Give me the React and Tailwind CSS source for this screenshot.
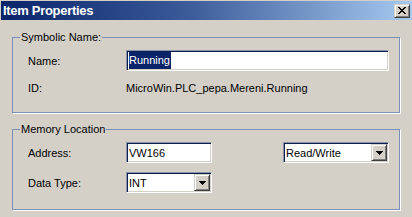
import React from "react";

const font = { fontFamily: '"Liberation Sans", Arial, sans-serif' };

function Arrow() {
  return (
    <div className="w-[16px] h-[17px] bg-[#d4d0c8] border border-t-[#d4d0c8] border-l-[#d4d0c8] border-b-[#404040] border-r-[#404040] shadow-[inset_1px_1px_0_#ffffff,inset_-1px_-1px_0_#808080] flex items-center justify-center">
      <svg width="7" height="4" viewBox="0 0 7 4">
        <path d="M0 0h7L3.5 4z" fill="#000" shapeRendering="crispEdges" />
      </svg>
    </div>
  );
}

function Sunken({ className, children }) {
  return (
    <div
      className={
        "h-[21px] bg-white border border-t-[#8a93a8] border-l-[#8a93a8] border-b-white border-r-white shadow-[inset_1px_1px_0_#0d1f4f,inset_-1px_-1px_0_#d4d0c8] flex items-center " +
        className
      }
    >
      {children}
    </div>
  );
}

function Combo({ className, value }) {
  return (
    <Sunken className={"pl-[2px] pr-[1px] justify-between " + className}>
      <span className="leading-[14px]">{value}</span>
      <Arrow />
    </Sunken>
  );
}

export default function App() {
  return (
    <div
      className="w-[412px] h-[217px] bg-[#d4d0c8] text-black text-[11px] overflow-hidden pt-[1px] pl-[1px]"
      style={font}
    >
      <div className="h-[19px] bg-[linear-gradient(to_right,#0a246a,#3a5a98_45%,#a6caf0)] flex items-center justify-between pl-[2px] pr-[2px]">
        <span className="text-white font-bold text-[13px] tracking-[-0.3px] leading-[19px]">Item Properties</span>
        <div className="w-[16px] h-[14px] bg-[#d4d0c8] border border-t-[#d4d0c8] border-l-[#d4d0c8] border-b-[#404040] border-r-[#404040] shadow-[inset_1px_1px_0_#ffffff,inset_-1px_-1px_0_#808080] flex items-center justify-center">
          <svg width="8" height="7" viewBox="0 0 8 7" shapeRendering="crispEdges">
            <path d="M0 0h2v1h1v1h2V1h1V0h2v1H7v1H6v1H5v1h1v1h1v1h1v1H6V6H5V5H3v1H2v1H0V6h1V5h1V4h1V3H2V2H1V1H0z" fill="#000" />
          </svg>
        </div>
      </div>

      <fieldset className="ml-[11px] mt-[10px] w-[388px] border border-[#7a8fb8] px-[7px] pb-[17px] shadow-[1px_1px_0_#ffffff]">
        <legend className="px-[1px] leading-[14px]">Symbolic Name:</legend>
        <div className="pl-[8px] pt-[6px]">
          <div className="flex items-center">
            <span className="w-[98px] leading-[14px]">Name:</span>
            <Sunken className="w-[263px] pl-[2px]">
              <span className="bg-[#0a246a] text-white leading-[17px] pr-[1px]">Running</span>
            </Sunken>
          </div>
          <div className="flex items-center mt-[10px]">
            <span className="w-[98px] leading-[14px]">ID:</span>
            <span className="leading-[14px]">MicroWin.PLC_pepa.Mereni.Running</span>
          </div>
        </div>
      </fieldset>

      <fieldset className="ml-[11px] mt-[9px] w-[388px] border border-[#7a8fb8] px-[7px] pb-[16px] shadow-[1px_1px_0_#ffffff]">
        <legend className="px-[1px] leading-[14px]">Memory Location</legend>
        <div className="pl-[8px] pt-[6px]">
          <div className="flex items-center">
            <span className="w-[98px] leading-[14px]">Address:</span>
            <Sunken className="w-[86px] pl-[2px]">
              <span className="leading-[14px]">VW166</span>
            </Sunken>
            <Combo className="w-[106px] ml-[71px]" value="Read/Write" />
          </div>
          <div className="flex items-center mt-[9px]">
            <span className="w-[98px] leading-[14px]">Data Type:</span>
            <Combo className="w-[86px]" value="INT" />
          </div>
        </div>
      </fieldset>
    </div>
  );
}
